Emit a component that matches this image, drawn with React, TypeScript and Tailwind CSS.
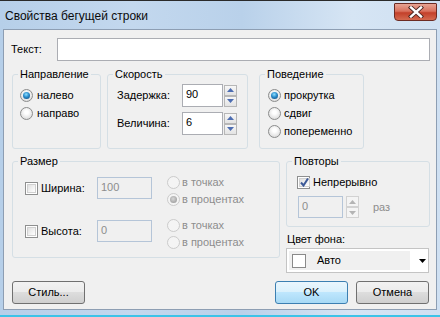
import clsx from "clsx";

function Radio({ checked, disabled }: { checked?: boolean; disabled?: boolean }) {
    return (
        <span
            className={clsx(
                "w-[13px] h-[13px] rounded-full border flex items-center justify-center shrink-0",
                disabled
                    ? "border-[#cbcbcb] bg-[#f4f4f4]"
                    : "border-[#8b8c8c] bg-[radial-gradient(circle_at_50%_40%,#ffffff_20%,#d0d0d0_100%)]"
            )}
        >
            {checked && (
                <span
                    className={clsx(
                        "w-[7px] h-[7px] rounded-full",
                        disabled
                            ? "bg-[radial-gradient(circle_at_45%_40%,#d8d8d8,#8f8f8f)]"
                            : "bg-[radial-gradient(circle_at_45%_35%,#8fe0ff_0%,#2a8ccc_45%,#0b3f70_100%)]"
                    )}
                />
            )}
        </span>
    );
}

function Check({ checked }: { checked?: boolean }) {
    return (
        <span className="w-[13px] h-[13px] border border-[#8e8f8f] bg-white p-[1px] shrink-0 flex">
            <span className="flex-1 border border-[#d0d0d0] bg-linear-to-br from-[#e0e0e0] to-[#ffffff] flex items-center justify-center">
                {checked && (
                    <svg width="9" height="9" viewBox="0 0 9 9">
                        <path d="M1 4.5 L3.5 7.5 L8 0.5" stroke="#3d5a98" strokeWidth="2" fill="none" />
                    </svg>
                )}
            </span>
        </span>
    );
}

function Spin({ disabled }: { disabled?: boolean }) {
    const arrow = disabled ? "#b4b4b4" : "#4d6db1";
    const btn = clsx(
        "h-[11px] w-[13px] border flex items-center justify-center",
        disabled
            ? "border-[#d2d2d2] bg-[#f4f4f4]"
            : "border-[#b7b7b7] bg-linear-to-b from-[#f7f7f7] to-[#e3e3e3]"
    );
    return (
        <div className="flex flex-col">
            <div className={btn}>
                <svg width="7" height="4" viewBox="0 0 7 4">
                    <path d="M0 4 L3.5 0 L7 4Z" fill={arrow} />
                </svg>
            </div>
            <div className={btn}>
                <svg width="7" height="4" viewBox="0 0 7 4">
                    <path d="M0 0 L3.5 4 L7 0Z" fill={arrow} />
                </svg>
            </div>
        </div>
    );
}

function Group({ title, className, children }: { title: string; className: string; children: React.ReactNode }) {
    return (
        <fieldset className={clsx("border border-[#d5dfe5] rounded-[3px] p-0 m-0 shrink-0", className)}>
            <legend className="ml-[5px] px-[2px] leading-[13px]">{title}</legend>
            {children}
        </fieldset>
    );
}

function Button({ label, primary, className }: { label: string; primary?: boolean; className?: string }) {
    return (
        <div
            className={clsx(
                "w-[73px] h-[23px] rounded-[3px] border flex items-center justify-center",
                primary
                    ? "border-[#3c7fb1] bg-[linear-gradient(to_bottom,#eaf6fd_0%,#d9f0fc_50%,#bee6fd_50%,#a7d9f5_100%)]"
                    : "border-[#707070] bg-[linear-gradient(to_bottom,#f2f2f2_0%,#ebebeb_50%,#dddddd_50%,#cfcfcf_100%)]",
                className
            )}
        >
            <span className="leading-[13px]">{label}</span>
        </div>
    );
}

export default function App() {
    return (
        <div className="w-[440px] h-[317px] flex flex-col overflow-hidden border-t border-[#2a2a2a] bg-[linear-gradient(to_right,#b6cfe9_0%,#c3d8ee_30%,#b9d1ea_55%,#d6e5f4_80%,#cfe0f2_100%)] font-['Liberation_Sans',Arial,sans-serif] text-[11px] text-black">
            {/* title bar */}
            <div className="h-[28px] flex items-start justify-between shrink-0">
                <div className="pl-[5px] pt-[8px] text-[12px] leading-[15px] text-[#0b0b0b]">Свойства бегущей строки</div>
                <div className="mt-[2px] mr-[3px] w-[43px] h-[18px] rounded-b-[4px] rounded-t-[1px] border border-[#6c2b23] bg-[linear-gradient(to_bottom,#e8a493_0%,#d9715d_45%,#c3402a_55%,#d46a4f_100%)] flex items-center justify-center">
                    <svg width="16" height="12" viewBox="0 0 16 12">
                        <path d="M3 1.5 L13 10.5 M13 1.5 L3 10.5" stroke="#4a2520" strokeWidth="4.2" strokeLinecap="square" />
                        <path d="M3 1.5 L13 10.5 M13 1.5 L3 10.5" stroke="#ffffff" strokeWidth="2.4" strokeLinecap="square" />
                    </svg>
                </div>
            </div>

            {/* client area */}
            <div className="mx-[3px] h-[281px] border border-[#8d9eb3] bg-[#f0f0f0] flex flex-col shrink-0">
                <div className="mt-[8px] h-[23px] flex items-center">
                    <span className="pl-[7px] w-[53px]">Текст:</span>
                    <div className="w-[373px] h-[23px] border border-[#abadb3] bg-white" />
                </div>

                <div className="mt-[7px] flex pl-[8px]">
                    <Group title="Направление" className="w-[89px] h-[81px]">
                        <div className="pt-[5px] pl-[7px] flex flex-col">
                            <div className="h-[18px] flex items-center gap-[4px]">
                                <Radio checked />
                                <span>налево</span>
                            </div>
                            <div className="h-[18px] flex items-center gap-[4px]">
                                <Radio />
                                <span>направо</span>
                            </div>
                        </div>
                    </Group>
                    <Group title="Скорость" className="ml-[6px] w-[141px] h-[81px]">
                        <div className="pt-[3px] pl-[9px] flex flex-col gap-[5px]">
                            <div className="h-[23px] flex items-center">
                                <span className="w-[65px]">Задержка:</span>
                                <div className="w-[41px] h-[23px] border border-[#abadb3] bg-white pl-[3px] pt-[3px] leading-[13px]">90</div>
                                <div className="ml-[1px]"><Spin /></div>
                            </div>
                            <div className="h-[23px] flex items-center">
                                <span className="w-[65px]">Величина:</span>
                                <div className="w-[41px] h-[23px] border border-[#abadb3] bg-white pl-[3px] pt-[3px] leading-[13px]">6</div>
                                <div className="ml-[1px]"><Spin /></div>
                            </div>
                        </div>
                    </Group>
                    <Group title="Поведение" className="ml-[11px] w-[105px] h-[81px]">
                        <div className="pt-[5px] pl-[8px] flex flex-col">
                            <div className="h-[18px] flex items-center gap-[3px]">
                                <Radio checked />
                                <span>прокрутка</span>
                            </div>
                            <div className="h-[18px] flex items-center gap-[3px]">
                                <Radio />
                                <span>сдвиг</span>
                            </div>
                            <div className="h-[18px] flex items-center gap-[3px]">
                                <Radio />
                                <span>попеременно</span>
                            </div>
                        </div>
                    </Group>
                </div>

                <div className="mt-[6px] flex items-start pl-[8px]">
                    <Group title="Размер" className="w-[268px] h-[103px]">
                        <div className="pt-[6px] pl-[12px] flex flex-col gap-[9px]">
                            {[
                                { label: "Ширина:", value: "100", pct: true },
                                { label: "Высота:", value: "0", pct: false },
                            ].map((row) => (
                                <div key={row.label} className="h-[34px] flex items-start">
                                    <div className="w-[72px] mt-[6px] flex items-center gap-[3px]">
                                        <Check />
                                        <span>{row.label}</span>
                                    </div>
                                    <div className="mt-[3px] w-[55px] h-[22px] border border-[#b5c5d8] bg-[#f0f0f0] pl-[3px] pt-[3px] leading-[13px] text-[#8d8d8d]">
                                        {row.value}
                                    </div>
                                    <div className="ml-[15px] flex flex-col text-[#8d8d8d]">
                                        <div className="h-[17px] flex items-center gap-[2px]">
                                            <Radio disabled />
                                            <span>в точках</span>
                                        </div>
                                        <div className="h-[17px] flex items-center gap-[2px]">
                                            <Radio disabled checked={row.pct} />
                                            <span>в процентах</span>
                                        </div>
                                    </div>
                                </div>
                            ))}
                        </div>
                    </Group>

                    <div className="ml-[6px] flex flex-col">
                        <Group title="Повторы" className="w-[144px] h-[72px]">
                            <div className="pt-[8px] pl-[10px] flex flex-col">
                                <div className="h-[13px] flex items-center gap-[3px]">
                                    <Check checked />
                                    <span>Непрерывно</span>
                                </div>
                                <div className="mt-[7px] ml-[1px] flex items-center">
                                    <div className="w-[45px] h-[22px] border border-[#b5c5d8] bg-[#f0f0f0] pl-[3px] pt-[3px] leading-[13px] text-[#8d8d8d]">0</div>
                                    <div className="ml-[3px]"><Spin disabled /></div>
                                    <span className="ml-[14px] text-[#8d8d8d]">раз</span>
                                </div>
                            </div>
                        </Group>
                        <div className="mt-[6px] h-[13px] leading-[13px] pl-[1px]">Цвет фона:</div>
                        <div className="mt-[2px] w-[143px] h-[25px] border border-[#c4c4c4] bg-white flex items-center p-[2px]">
                            <div className="w-[121px] h-full bg-[#f0f0f0] flex items-center pl-[3px]">
                                <div className="w-[14px] h-[14px] border border-[#8a8a8a] bg-white" />
                                <span className="ml-[11px]">Авто</span>
                            </div>
                            <svg className="ml-[9px]" width="7" height="4" viewBox="0 0 7 4">
                                <path d="M0 0 L3.5 4 L7 0Z" fill="#000" />
                            </svg>
                        </div>
                    </div>
                </div>

                <div className="mt-[8px] flex pl-[8px]">
                    <Button label="Стиль..." />
                    <Button label="OK" primary className="ml-[190px]" />
                    <Button label="Отмена" className="ml-[8px]" />
                </div>
            </div>

            {/* bottom frame */}
            <div className="flex-1 border-b-[2px] border-[#3cc3e8]" />
        </div>
    );
}
